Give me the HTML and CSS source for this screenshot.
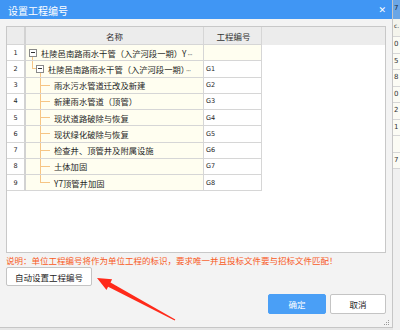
FILE: index.html
```html
<!DOCTYPE html>
<html lang="zh-CN">
  <head>
    <meta charset="UTF-8" />
    <title>设置工程编号</title>
    <link rel="stylesheet" href="styles.css">
  </head>
  <body>
    <div class="screen">
      <div class="dialog">
        <div class="titlebar">
          <span class="title">设置工程编号</span>
          <span class="close">✕</span>
        </div>

        <div class="dialog-body">
          <div class="grid-box">
            <div class="row head">
              <div class="cell num"></div>
              <div class="cell name">名称</div>
              <div class="cell code">工程编号</div>
            </div>
            <div class="row">
              <div class="cell num">1</div>
              <div class="cell name lvl0"><span class="toggle"></span><span class="text">杜陵邑南路雨水干管（入浐河段一期）Y<span class="dots">···</span></span></div>
              <div class="cell code cream"></div>
            </div>
            <div class="row">
              <div class="cell num">2</div>
              <div class="cell name lvl1"><span class="toggle"></span><span class="text">杜陵邑南路雨水干管（入浐河段一期）<span class="dots">···</span></span></div>
              <div class="cell code">G1</div>
            </div>
            <div class="row">
              <div class="cell num">3</div>
              <div class="cell name leaf">雨水污水管道迁改及新建</div>
              <div class="cell code">G2</div>
            </div>
            <div class="row">
              <div class="cell num">4</div>
              <div class="cell name leaf">新建雨水管道（顶管）</div>
              <div class="cell code">G3</div>
            </div>
            <div class="row">
              <div class="cell num">5</div>
              <div class="cell name leaf">现状道路破除与恢复</div>
              <div class="cell code">G4</div>
            </div>
            <div class="row">
              <div class="cell num">6</div>
              <div class="cell name leaf">现状绿化破除与恢复</div>
              <div class="cell code">G5</div>
            </div>
            <div class="row">
              <div class="cell num">7</div>
              <div class="cell name leaf">检查井、顶管井及附属设施</div>
              <div class="cell code">G6</div>
            </div>
            <div class="row">
              <div class="cell num">8</div>
              <div class="cell name leaf">土体加固</div>
              <div class="cell code">G7</div>
            </div>
            <div class="row">
              <div class="cell num">9</div>
              <div class="cell name leaf last">Y7顶管井加固</div>
              <div class="cell code">G8</div>
            </div>
          </div>

          <p class="note">说明：单位工程编号将作为单位工程的标识，要求唯一并且投标文件要与招标文件匹配！</p>

          <button class="btn auto">自动设置工程编号</button>

          <div class="footer">
            <button class="btn primary">确定</button>
            <button class="btn cancel">取消</button>
          </div>
        </div>

        <!-- red annotation arrow drawn over the dialog -->
        <svg class="arrow" width="393" height="328" viewBox="0 0 393 328">
          <polygon fill="#ff2a1a" points="97,278 112.1,279.3 110.5,282.4 175.3,319.6 174.7,320.4 108.1,286.8 106.5,289.9" />
        </svg>

        <svg class="grip" width="7" height="7" viewBox="0 0 7 7">
          <rect x="5" y="1" width="1" height="1" fill="#9a9a9a" />
          <rect x="3" y="3" width="1" height="1" fill="#9a9a9a" />
          <rect x="5" y="3" width="1" height="1" fill="#9a9a9a" />
          <rect x="1" y="5" width="1" height="1" fill="#9a9a9a" />
          <rect x="3" y="5" width="1" height="1" fill="#9a9a9a" />
          <rect x="5" y="5" width="1" height="1" fill="#9a9a9a" />
        </svg>
      </div>

      <div class="backdrop">
        <div class="bd-head">7</div>
        <div class="bd-sub">c.</div>
        <div class="bd-cell">0</div>
        <div class="bd-cell">5</div>
        <div class="bd-cell">8</div>
        <div class="bd-cell">0</div>
        <div class="bd-cell">2</div>
        <div class="bd-cell">1</div>
        <div class="bd-cell"></div>
        <div class="bd-cell">7</div>
        <div class="bd-rest"></div>
      </div>
    </div>
  </body>
</html>
```

FILE: styles.css
```css
* {
  margin: 0;
  padding: 0;
  box-sizing: border-box;
}

body {
  width: 400px;
  height: 330px;
  overflow: hidden;
  font-family: "Noto Sans CJK SC", "Noto Sans", sans-serif;
  background: #e6e6e6;
}

.screen {
  display: flex;
  height: 330px;
}

.dialog {
  position: relative;
  width: 393px;
  height: 328px;
  flex-shrink: 0;
  display: flex;
  flex-direction: column;
  background: #f3f3f3;
  border-right: 1px solid #c6c6c6;
  border-bottom: 1px solid #c6c6c6;
}

.titlebar {
  height: 19px;
  display: flex;
  align-items: center;
  justify-content: space-between;
  padding: 1px 6px 0 8px;
  background: #4096f4;
  color: #fff;
}

.title {
  font-size: 10px;
}

.close {
  font-size: 9px;
  font-weight: bold;
  font-family: "DejaVu Sans", sans-serif;
}

.dialog-body {
  flex: 1;
  padding: 7px 6px 0 6px;
}

.grid-box {
  width: 380px;
  height: 227px;
  background: #fff;
  border: 1px solid #c8c8c8;
}

.row {
  display: grid;
  grid-template-columns: 19px 178px 58px;
  height: 16.25px;
}

.row.head {
  height: 18px;
  background: #ececec;
}

.cell {
  display: flex;
  align-items: center;
  overflow: hidden;
  white-space: nowrap;
  font-size: 8.3px;
  color: #1e1e1e;
  border-right: 1px solid #d6d6d6;
  border-bottom: 1px solid #d6d6d6;
}

.head .cell {
  justify-content: center;
  color: #333;
  font-size: 8.5px;
}

.num {
  justify-content: center;
  font-family: "DejaVu Sans", sans-serif;
  font-size: 6.5px;
  border-right: 2px solid #d2d2d2;
}

.code {
  padding-left: 2px;
  font-family: "DejaVu Sans", sans-serif;
  font-size: 6.5px;
}

.head .code {
  font-family: "Noto Sans CJK SC", sans-serif;
}

.code.cream {
  background: #fffef0;
}

.name {
  background-color: #fffef0;
}

.head .name {
  background: none;
}

.dots {
  font-family: "DejaVu Sans", sans-serif;
  font-size: 6.5px;
  letter-spacing: -0.5px;
  margin-left: 1px;
}

/* tree guide lines */
.lvl0 {
  padding-left: 3px;
  background: linear-gradient(#f6c585, #f6c585) 6px 100% / 1px 50% no-repeat, #fffef0;
}

.lvl1 {
  padding-left: 10px;
  background:
    linear-gradient(#f6c585, #f6c585) 6px 0 / 1px 50% no-repeat,
    linear-gradient(#f6c585, #f6c585) 6px 50% / 4px 1px no-repeat,
    linear-gradient(#f6c585, #f6c585) 14px 100% / 1px 50% no-repeat,
    #fffef0;
}

.leaf {
  padding-left: 28px;
  background:
    linear-gradient(#f6c585, #f6c585) 14px 0 / 1px 100% no-repeat,
    linear-gradient(#f6c585, #f6c585) 14px 50% / 10px 1px no-repeat,
    #fffef0;
}

.leaf.last {
  background:
    linear-gradient(#f6c585, #f6c585) 14px 0 / 1px 50% no-repeat,
    linear-gradient(#f6c585, #f6c585) 14px 50% / 10px 1px no-repeat,
    #fffef0;
}

.toggle {
  width: 8px;
  height: 8px;
  flex-shrink: 0;
  border: 1px solid #8a8a8a;
  background: linear-gradient(#333, #333) center / 4px 1px no-repeat, #fff;
}

.toggle + .text {
  margin-left: 4px;
}

.note {
  margin-top: 1px;
  line-height: 12px;
  font-size: 8.5px;
  color: #f85a24;
  white-space: nowrap;
}

.btn {
  display: block;
  height: 20px;
  font-family: inherit;
  font-size: 8.5px;
  color: #222;
  background: #fff;
  border: 1px solid #c4c4c4;
  border-radius: 2px;
}

.auto {
  width: 86px;
  height: 19px;
  margin-top: 1px;
}

.footer {
  display: flex;
  justify-content: flex-end;
  gap: 4px;
  margin-top: 8px;
}

.primary {
  width: 58px;
  color: #fff;
  background: #4a9ff6;
  border-color: #4a9ff6;
}

.cancel {
  width: 56px;
}

.arrow {
  position: absolute;
  left: 0;
  top: 0;
  pointer-events: none;
}

.grip {
  position: absolute;
  right: 2px;
  bottom: 1px;
}

/* sliver of the spreadsheet behind the dialog */
.backdrop {
  flex: 1;
  display: flex;
  flex-direction: column;
  background: #f0f0f0;
  font-family: "DejaVu Sans", sans-serif;
  font-size: 7px;
  color: #333;
  overflow: hidden;
}

.bd-head {
  height: 19px;
  padding: 4px 0 0 1px;
  background: #6aa6e6;
  color: #1c2a3a;
}

.bd-sub {
  height: 18px;
  padding: 3px 0 0 1px;
  background: #f4f4ec;
  border-bottom: 1px solid #d6d6d6;
  font-size: 6px;
}

.bd-cell {
  height: 16.5px;
  padding: 3px 0 0 1px;
  background: #fbfbf4;
  border-bottom: 1px solid #d6d6d6;
}

.bd-rest {
  flex: 1;
  background: #f0f0f0;
}
```
